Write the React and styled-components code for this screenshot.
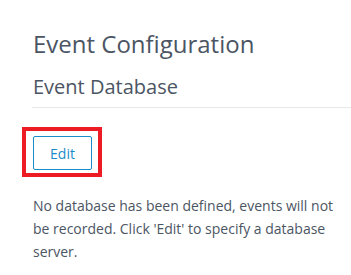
import React from "react";
import styled, { createGlobalStyle } from "styled-components";

const Global = createGlobalStyle`
  html, body { margin: 0; padding: 0; background: #fff; }
  body { font-family: "Open Sans", "Noto Sans", sans-serif; }
`;

const Page = styled.div`
  padding: 28px 0 0 33px;
`;

const Title = styled.h1`
  margin: 0;
  font-size: 24px;
  line-height: 32px;
  font-weight: 400;
  color: #4b5563;
`;

const SectionHeader = styled.h2`
  margin: 13px 0 0 -1px;
  padding: 0 0 7px 1px;
  font-size: 20px;
  line-height: 27px;
  font-weight: 400;
  color: #4b5563;
  border-bottom: 1px solid #e6e8ea;
`;

const ButtonWrap = styled.div`
  position: relative;
  margin-top: 28px;
  display: inline-block;
`;

const Button = styled.button`
  display: block;
  width: 59px;
  height: 34px;
  border: 1px solid #1b8cc7;
  border-radius: 2px;
  background: #fff;
  color: #1b8cc7;
  font-family: "Open Sans", sans-serif;
  font-size: 14px;
  padding: 0;
  cursor: pointer;
`;

const Highlight = styled.div`
  position: absolute;
  left: -11px;
  top: -9px;
  width: 80px;
  height: 50px;
  box-sizing: border-box;
  border: 4.5px solid #ed1c24;
  pointer-events: none;
`;

const Text = styled.p`
  margin: 24px 0 0;
  width: 312px;
  font-size: 14px;
  line-height: 23px;
  color: #4b5563;
`;

export default function App() {
  return (
    <Page>
      <Global />
      <Title>Event Configuration</Title>
      <SectionHeader>Event Database</SectionHeader>
      <ButtonWrap>
        <Button>Edit</Button>
        <Highlight />
      </ButtonWrap>
      <Text>
        No database has been defined, events will not be recorded. Click 'Edit' to specify a database server.
      </Text>
    </Page>
  );
}
